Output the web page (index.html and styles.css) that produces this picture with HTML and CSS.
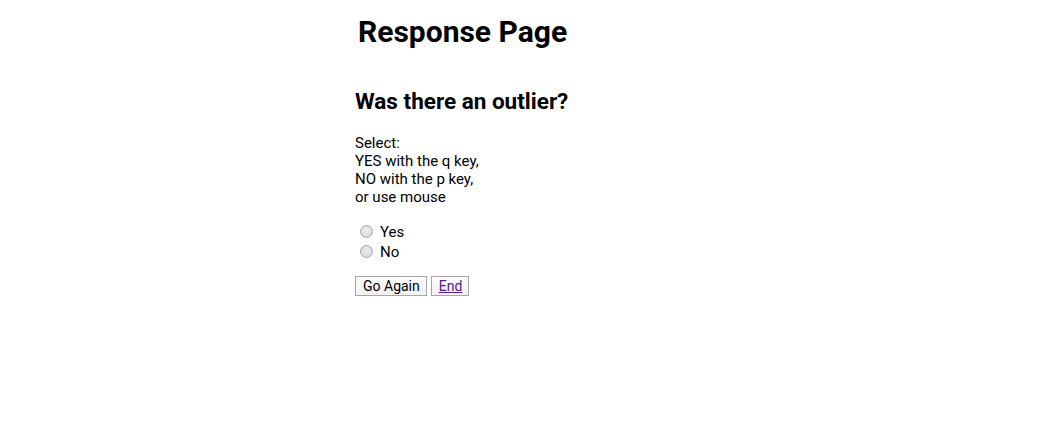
FILE: index.html
```html
<!DOCTYPE html>
<html>
<head>
<meta charset="utf-8">
<link rel="stylesheet" href="styles.css">
</head>
<body>
<main class="page">
  <h1 class="title">Response Page</h1>
  <h2 class="question">Was there an outlier?</h2>
  <p class="instructions">Select:<br>YES with the q key,<br>NO with the p key,<br>or use mouse</p>
  <div class="options">
    <label class="option"><input type="radio" name="ans" class="radio"> Yes</label>
    <label class="option"><input type="radio" name="ans" class="radio"> No</label>
  </div>
  <div class="actions">
    <button class="btn">Go Again</button>
    <button class="btn"><a href="#" class="btn-link">End</a></button>
  </div>
</main>
</body>
</html>
```
FILE: styles.css
```css
html, body {
  margin: 0;
  padding: 0;
  background: #fff;
}
body {
  font-family: Roboto, "Liberation Sans", sans-serif;
  color: #000;
}
.page {
  width: 351px;
  margin: 0 auto;
  padding-top: 1px;
}
.title {
  font-size: 30px;
  font-weight: 700;
  margin: 13px 0 0 3px;
  line-height: 35px;
}
.question {
  font-size: 22.5px;
  font-weight: 700;
  margin: 38px 0 0 0;
  line-height: 28px;
}
.instructions {
  font-size: 15px;
  line-height: 18px;
  margin: 19px 0 0 0;
}
.options {
  margin-top: 16px;
  display: flex;
  flex-direction: column;
}
.option {
  font-size: 15px;
  line-height: 20px;
  display: flex;
  align-items: center;
}
.radio {
  appearance: none;
  -webkit-appearance: none;
  margin: 0 7px 0 5px;
  width: 13px;
  height: 13px;
  border-radius: 50%;
  border: 1px solid #a8a8a8;
  background: radial-gradient(circle at 50% 40%, #ececec 0%, #dcdcdc 70%, #cfcfcf 100%);
  box-sizing: border-box;
  position: relative;
  top: -1px;
}
.actions {
  margin-top: 14px;
  display: flex;
  gap: 4px;
}
.btn {
  font-family: Roboto, "Liberation Sans", sans-serif;
  font-size: 14px;
  padding: 0 6px 0 7px;
  background: linear-gradient(#fdfdfd, #f1f1f1);
  border: 1px solid #a6a6a6;
  border-radius: 0;
  height: 20px;
  line-height: 16px;
  color: #000;
}
.btn-link {
  color: #551a8b;
}
```
